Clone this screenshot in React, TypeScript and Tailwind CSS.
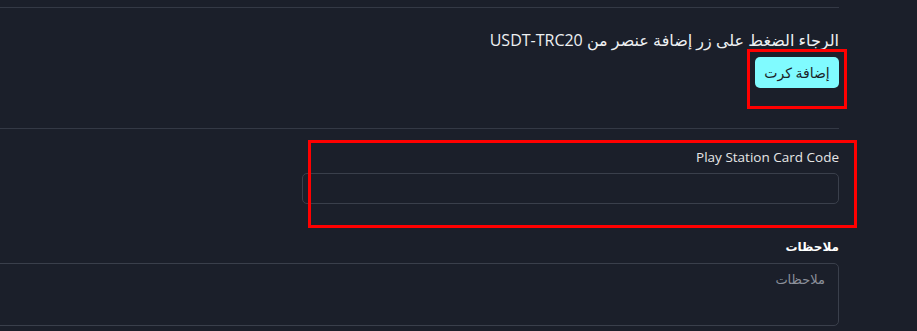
import React from 'react';

export default function App() {
  return (
    <div className="min-h-screen overflow-hidden bg-[#1b1f2a] pr-[78px] font-['Open_Sans','DejaVu_Sans',sans-serif] text-[#e9eaec]">
      <div dir="rtl" className="pt-[7px]">
        <div className="border-t border-[#343945] pb-[40px] pt-[20px]">
          <p className="text-[16px] leading-[24px] text-[#eef0f2]">الرجاء الضغط على زر إضافة عنصر من USDT-TRC20</p>
          <div className="relative mt-[5px] inline-block">
            <button className="h-[31px] w-[84px] rounded-[5px] bg-[#80fbff] text-[14px] text-[#1b1f2a]">إضافة كرت</button>
            <span className="pointer-events-none absolute -bottom-[21px] -left-2 -right-2 -top-2 border-[3px] border-[#ff0000]" />
          </div>
        </div>

        <div className="border-t border-[#343945] pt-[18px]">
          <div className="relative w-[537px]">
            <label className="block text-[13.5px] leading-[20px] text-[#e6e6e6]">Play Station Card Code</label>
            <input dir="ltr" className="mt-[6px] block h-[31px] w-full rounded-[5px] border border-[#3a3f4b] bg-transparent px-3 text-[14px] outline-none" />
            <span className="pointer-events-none absolute -bottom-[24px] -right-[18px] -top-[7px] left-[6px] border-[3px] border-[#ff0000]" />
          </div>

          <label className="mt-[33px] block text-[12px] font-bold leading-[20px] text-white">ملاحظات</label>
          <textarea
            placeholder="ملاحظات"
            className="mt-[6px] block h-[63px] w-[calc(100%+10px)] resize-none rounded-[5px] border border-[#3a3f4b] bg-transparent px-[13px] py-[6px] text-[13px] text-[#e6e6e6] outline-none placeholder:text-[#8b909a]"
          />
        </div>
      </div>
    </div>
  );
}
